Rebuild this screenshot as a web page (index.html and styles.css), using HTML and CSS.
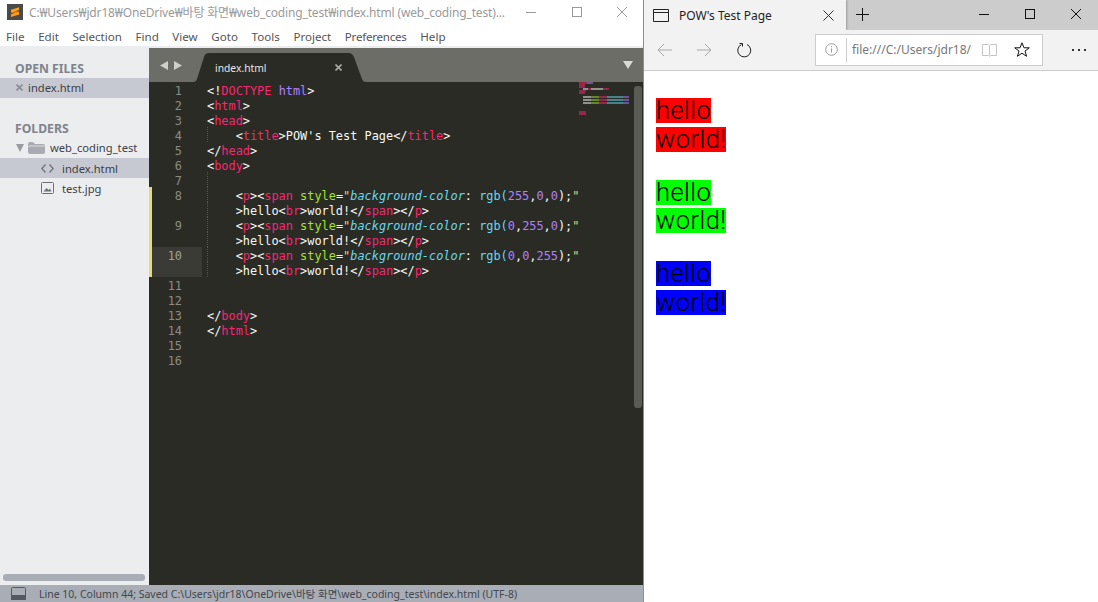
FILE: index.html
```html
<!DOCTYPE html>
<html lang="en">
<head>
<meta charset="utf-8">
<title>Windows</title>
<link rel="stylesheet" href="styles.css">
</head>
<body>
<div class="desktop">
  <section class="sublime">
    <header class="titlebar">
      <svg class="app-icon" width="16" height="16" viewBox="0 0 16 16"><rect width="16" height="16" fill="#4a4a48"/><path d="M4 8.500 12 11V8L4 5.500z" fill="#c97a10"/><path d="M4 5.800 12 3.200v2.900L4 8.700zM4 10.200l8-2.600v2.900l-8 2.600z" fill="#ff9d1e"/></svg>
      <span class="title-text">C:₩Users₩jdr18₩OneDrive₩바탕 화면₩web_coding_test₩index.html (web_coding_test)...</span>
      <div class="win-controls">
        <svg width="10" height="10" viewBox="0 0 10 10"><path d="M0 5.500h10" stroke="#999" fill="none"/></svg>
        <svg width="10" height="10" viewBox="0 0 10 10"><rect x=".5" y=".5" width="9" height="9" stroke="#999" fill="none"/></svg>
        <svg width="10" height="10" viewBox="0 0 10 10"><path d="M0 0l10 10M10 0L0 10" stroke="#999" fill="none"/></svg>
      </div>
    </header>
    <nav class="menubar">
      <span>File</span><span>Edit</span><span>Selection</span><span>Find</span><span>View</span><span>Goto</span><span>Tools</span><span>Project</span><span>Preferences</span><span>Help</span>
    </nav>
    <div class="workspace">
      <aside class="sidebar">
        <h2 class="side-head">OPEN FILES</h2>
        <div class="side-row selected open-row">
          <svg class="close-x" width="7" height="7" viewBox="0 0 7 7"><path d="M.5.5l6 6M6.500.5l-6 6" stroke="#8a8d94" stroke-width="1.600" fill="none"/></svg>
          <span>index.html</span>
        </div>
        <h2 class="side-head folders">FOLDERS</h2>
        <div class="side-row folder-row">
          <svg width="8" height="8" viewBox="0 0 8 8"><path d="M0 0h8L4 8z" fill="#999ba1"/></svg>
          <svg width="17" height="12" viewBox="0 0 17 12"><path d="M0 2q0-2 2-2h3l2 2h8q2 0 2 2v6q0 2-2 2H2q-2 0-2-2z" fill="#a8abb1"/><path d="M.5 5q0-1 1-1h14q1 0 1 1" fill="none" stroke="#dcdee2"/></svg>
          <span>web_coding_test</span>
        </div>
        <div class="side-row selected file-row">
          <svg width="13" height="9" viewBox="0 0 13 9"><path d="M4.500 .5 .8 4.500l3.700 4M8.500 .5l3.700 4-3.700 4" fill="none" stroke="#6d7078" stroke-width="1.200"/></svg>
          <span>index.html</span>
        </div>
        <div class="side-row file-row">
          <svg width="13" height="12" viewBox="0 0 13 12"><rect x=".5" y=".5" width="12" height="11" rx="1" fill="none" stroke="#6d7078"/><path d="M2.500 9.500 5.500 6l2 2 1.500-1.500 1.500 3z" fill="#6d7078"/></svg>
          <span>test.jpg</span>
        </div>
        <div class="side-spacer"></div>
        <div class="side-scroll"></div>
      </aside>
      <main class="editor-pane">
        <div class="tabbar">
          <div class="tab-nav">
            <svg width="8" height="9" viewBox="0 0 8 9"><path d="M8 0v9L0 4.500z" fill="#cfd0cc"/></svg>
            <svg width="8" height="9" viewBox="0 0 8 9"><path d="M0 0v9l8-4.500z" fill="#cfd0cc"/></svg>
          </div>
          <div class="tab">
            <svg class="tab-shape" width="172" height="29" viewBox="0 0 172 29"><path d="M0 29Q2 29 3 26L10 4Q11 0 15 0H155Q158 0 160 4L168 26Q169 29 172 29z" fill="#2a2b25"/></svg>
            <span class="tab-label">index.html</span>
            <svg class="tab-close" width="7" height="7" viewBox="0 0 7 7"><path d="M.5.5l6 6M6.500.5l-6 6" stroke="#a9aaa5" stroke-width="1.600" fill="none"/></svg>
          </div>
          <svg class="tab-menu" width="10" height="8" viewBox="0 0 10 8"><path d="M0 0h10L5 8z" fill="#d9dad6"/></svg>
        </div>
        <div class="editor">
          <div class="code">
            <div class="ln"><span class="num">1</span><code><i class="w">&lt;!</i><i class="t">DOCTYPE</i> <i class="p">html</i><i class="w">&gt;</i></code></div>
            <div class="ln"><span class="num">2</span><code><i class="w">&lt;</i><i class="t">html</i><i class="w">&gt;</i></code></div>
            <div class="ln"><span class="num">3</span><code><i class="w">&lt;</i><i class="t">head</i><i class="w">&gt;</i></code></div>
            <div class="ln"><span class="num">4</span><code><b class="guide"></b><i class="w">&lt;</i><i class="t">title</i><i class="w">&gt;POW's Test Page&lt;/</i><i class="t">title</i><i class="w">&gt;</i></code></div>
            <div class="ln"><span class="num">5</span><code><i class="w">&lt;/</i><i class="t">head</i><i class="w">&gt;</i></code></div>
            <div class="ln"><span class="num">6</span><code><i class="w">&lt;</i><i class="t">body</i><i class="w">&gt;</i></code></div>
            <div class="ln"><span class="num">7</span><code><b class="guide"></b></code></div>
            <div class="ln mod"><span class="num">8</span><code><b class="guide"></b><i class="w">&lt;</i><i class="t">p</i><i class="w">&gt;&lt;</i><i class="t">span</i> <i class="g">style</i><i class="w">=</i><i class="y">"</i><i class="c it">background-color</i><i class="w">:</i> <i class="c">rgb(</i><i class="p">255</i><i class="w">,</i><i class="p">0</i><i class="w">,</i><i class="p">0</i><i class="w">);</i><i class="y">"</i></code></div>
            <div class="ln mod"><span class="num"></span><code><b class="guide"></b><i class="w">&gt;hello&lt;</i><i class="t">br</i><i class="w">&gt;world!&lt;/</i><i class="t">span</i><i class="w">&gt;&lt;/</i><i class="t">p</i><i class="w">&gt;</i></code></div>
            <div class="ln mod"><span class="num">9</span><code><b class="guide"></b><i class="w">&lt;</i><i class="t">p</i><i class="w">&gt;&lt;</i><i class="t">span</i> <i class="g">style</i><i class="w">=</i><i class="y">"</i><i class="c it">background-color</i><i class="w">:</i> <i class="c">rgb(</i><i class="p">0</i><i class="w">,</i><i class="p">255</i><i class="w">,</i><i class="p">0</i><i class="w">);</i><i class="y">"</i></code></div>
            <div class="ln mod"><span class="num"></span><code><b class="guide"></b><i class="w">&gt;hello&lt;</i><i class="t">br</i><i class="w">&gt;world!&lt;/</i><i class="t">span</i><i class="w">&gt;&lt;/</i><i class="t">p</i><i class="w">&gt;</i></code></div>
            <div class="ln mod cur"><span class="num">10</span><code><b class="guide"></b><i class="w">&lt;</i><i class="t">p</i><i class="w">&gt;&lt;</i><i class="t">span</i> <i class="g">style</i><i class="w">=</i><i class="y">"</i><i class="c it">background-color</i><i class="w">:</i> <i class="c">rgb(</i><i class="p">0</i><i class="w">,</i><i class="p">0</i><i class="w">,</i><i class="p">255</i><i class="w">);</i><i class="y">"</i></code></div>
            <div class="ln mod cur"><span class="num"></span><code><b class="guide"></b><i class="w">&gt;hello&lt;</i><i class="t">br</i><i class="w">&gt;world!&lt;/</i><i class="t">span</i><i class="w">&gt;&lt;/</i><i class="t">p</i><i class="w">&gt;</i></code></div>
            <div class="ln"><span class="num">11</span><code></code></div>
            <div class="ln"><span class="num">12</span><code></code></div>
            <div class="ln"><span class="num">13</span><code><i class="w">&lt;/</i><i class="t">body</i><i class="w">&gt;</i></code></div>
            <div class="ln"><span class="num">14</span><code><i class="w">&lt;/</i><i class="t">html</i><i class="w">&gt;</i></code></div>
            <div class="ln"><span class="num">15</span><code></code></div>
            <div class="ln"><span class="num">16</span><code></code></div>
          </div>
          <div class="minimap">
            <div class="mm-row"><b class="mt mm8"></b><b class="mv mm6"></b></div>
            <div class="mm-row"><b class="mt mm6"></b></div>
            <div class="mm-row"><b class="mt mm6"></b></div>
            <div class="mm-row in"><b class="mw mm5"></b><b class="mt mm3"></b><b class="mw mm12"></b><b class="mt mm6"></b></div>
            <div class="mm-row"><b class="mt mm7"></b></div>
            <div class="mm-row"><b class="mt mm6"></b></div>
            <div class="mm-row"></div>
            <div class="mm-row in wide"><b class="mw mm8"></b><b class="mg mm8"></b><b class="mt mm8"></b><b class="mc mm16"></b><b class="mv mm6"></b></div>
            <div class="mm-row in wide"><b class="mw mm8"></b><b class="mg mm8"></b><b class="mt mm8"></b><b class="mc mm16"></b><b class="mv mm6"></b></div>
            <div class="mm-row in wide"><b class="mw mm8"></b><b class="mg mm8"></b><b class="mt mm8"></b><b class="mc mm16"></b><b class="mv mm6"></b></div>
            <div class="mm-row"></div>
            <div class="mm-row"></div>
            <div class="mm-row"></div>
            <div class="mm-row"><b class="mt mm7"></b></div>
            <div class="mm-row"><b class="mt mm7"></b></div>
          </div>
          <div class="vscroll"></div>
        </div>
      </main>
    </div>
    <footer class="statusbar">
      <svg width="15" height="13" viewBox="0 0 15 13"><rect x=".5" y=".5" width="14" height="12" rx="1" fill="none" stroke="#555a62"/><rect x="0" y="8" width="15" height="5" fill="#555a62"/></svg>
      <span>Line 10, Column 44; Saved C:\Users\jdr18\OneDrive\바탕 화면\web_coding_test\index.html (UTF-8)</span>
    </footer>
  </section>
  <section class="browser">
    <div class="tabstrip">
      <div class="b-tab">
        <svg width="16" height="13" viewBox="0 0 16 13"><path d="M.5.5h15v12H.5zM.5 3.500h15" fill="none" stroke="#222"/></svg>
        <span class="b-tab-title">POW's Test Page</span>
        <svg class="b-tab-x" width="11" height="11" viewBox="0 0 11 11"><path d="M.5.5l10 10M10.500.5l-10 10" stroke="#333" fill="none"/></svg>
      </div>
      <svg class="b-new" width="13" height="13" viewBox="0 0 13 13"><path d="M6.500 0v13M0 6.500h13" stroke="#111" fill="none"/></svg>
      <div class="b-controls">
        <svg width="10" height="10" viewBox="0 0 10 10"><path d="M0 5.500h10" stroke="#111" fill="none"/></svg>
        <svg width="10" height="10" viewBox="0 0 10 10"><rect x=".5" y=".5" width="9" height="9" stroke="#111" fill="none"/></svg>
        <svg width="10" height="10" viewBox="0 0 10 10"><path d="M0 0l10 10M10 0L0 10" stroke="#111" fill="none"/></svg>
      </div>
    </div>
    <div class="toolbar">
      <svg width="15" height="14" viewBox="0 0 15 14"><path d="M15 7H1M7 1 1 7l6 6" stroke="#a8a8a8" fill="none"/></svg>
      <svg width="15" height="14" viewBox="0 0 15 14"><path d="M0 7h14M8 1l6 6-6 6" stroke="#a8a8a8" fill="none"/></svg>
      <svg width="15" height="15" viewBox="0 0 15 15"><path d="M4.500 1.500A6.500 6.500 0 1 0 10 1.500" stroke="#222" fill="none"/><path d="M2.500 .5h3v3" stroke="#222" fill="none"/></svg>
      <div class="address">
        <svg width="13" height="13" viewBox="0 0 13 13"><circle cx="6.500" cy="6.500" r="5.800" fill="none" stroke="#999"/><path d="M6.500 5.500v4M6.500 3v1.200" stroke="#999" fill="none"/></svg>
        <span class="addr-sep"></span>
        <span class="addr-url">file:///C:/Users/jdr18/</span>
        <svg class="addr-book" width="15" height="14" viewBox="0 0 15 14"><path d="M.5 1.500h6l1 1 1-1h6v11h-6l-1 1-1-1h-6zM7.500 2.500v10" fill="none" stroke="#c4c4c4"/></svg>
        <svg class="addr-star" width="16" height="15" viewBox="0 0 16 15"><path d="M8 .8l2 5h5.300l-4.300 3.300 1.600 5.200L8 11.200l-4.600 3.100L5 9.100.7 5.800H6z" fill="none" stroke="#111"/></svg>
      </div>
      <svg class="more" width="15" height="3" viewBox="0 0 15 3"><path d="M0 0h2v2H0zM6 0h2v2H6zM12 0h2v2h-2z" fill="#333"/></svg>
    </div>
    <div class="page">
      <p class="para"><span class="hl red">hello</span><span class="hl red">world!</span></p>
      <p class="para"><span class="hl green">hello</span><span class="hl green">world!</span></p>
      <p class="para"><span class="hl blue">hello</span><span class="hl blue">world!</span></p>
    </div>
  </section>
</div>
</body>
</html>
```
FILE: styles.css
```css
* { box-sizing: border-box; }
html, body { margin: 0; height: 100%; overflow: hidden; }
body { font-family: "Noto Sans", "Noto Sans CJK KR", sans-serif; background: #fff; }
.desktop { display: flex; width: 1098px; height: 602px; }

.sublime { width: 644px; height: 602px; display: flex; flex-direction: column; border-right: 1px solid #8f908c; flex: none; }
.titlebar { height: 28px; display: flex; align-items: center; padding: 0 16px 4px 7px; background: #fff; flex: none; }
.app-icon { flex: none; margin-right: 6px; }
.title-text { font-size: 12px; color: #9a9a9a; white-space: nowrap; letter-spacing: -.16px; flex: 1; min-width: 0; }
.win-controls { display: flex; gap: 35.500px; flex: none; }
.menubar { height: 18px; display: flex; gap: 13.600px; padding: 0 0 0 6px; font-size: 11.600px; line-height: 18px; color: #555; background: #fff; flex: none; }
.menubar span:nth-child(9) { letter-spacing: -.25px; }

.workspace { flex: 1; display: flex; min-height: 0; }
.sidebar { width: 149px; background: #ebedef; display: flex; flex-direction: column; flex: none; }
.side-head { margin: 0; padding-left: 15px; font-size: 12.200px; font-weight: 700; color: #80838b; line-height: 16px; }
.sidebar > .side-head:first-child { margin-top: 15px; }
.side-head.folders { margin-top: 23px; }
.side-row { height: 20px; display: flex; align-items: center; padding-bottom: 2px; font-size: 11.200px; color: #3f4148; white-space: nowrap; }
.side-row svg { flex: none; }
.selected { background: #c6c9d2; }
.open-row { padding-left: 16px; margin-top: 1px; }
.close-x { margin-right: 5px; }
.folder-row { padding-left: 16px; padding-bottom: 1px; margin-top: 1px; }
.folder-row svg:nth-child(2) { margin: 0 5px 0 4px; }
.file-row { padding-left: 41px; padding-bottom: 0; }
.file-row svg { margin-right: 8px; }
.side-spacer { flex: 1; }
.side-scroll { height: 7px; margin: 0 4px 4px 3px; border-radius: 3px; background: #a8adb6; }

.editor-pane { flex: 1; display: flex; flex-direction: column; min-width: 0; }
.tabbar { height: 36px; background: #6c6d67; border-top: 2px solid #ebedef; display: flex; align-items: flex-end; flex: none; }
.tab-nav { display: flex; gap: 6px; align-self: center; margin-left: 11px; width: 34px; flex: none; }
.tab { width: 172px; height: 29px; position: relative; display: flex; align-items: center; padding: 0 24px 0 21px; justify-content: space-between; flex: none; font-size: 10.300px; color: #e6e6e2; }
.tab-shape { position: absolute; left: 0; top: 0; }
.tab-label, .tab-close { position: relative; }
.tab-close { flex: none; }
.tab-menu { margin-left: auto; margin-right: 10px; align-self: center; flex: none; }

.editor { flex: 1; background: #2a2b25; position: relative; min-height: 0; }
.ln { height: 15px; display: flex; font-family: "DejaVu Sans Mono", monospace; font-size: 11.900px; line-height: 18px; border-left: 3px solid transparent; }
.ln.mod { border-left-color: #e6db74; }
.num { width: 50px; height: 15px; text-align: right; padding-right: 20px; color: #8a8b85; flex: none; }
.cur .num { background: #3a3b34; color: #a0a19b; }
code { font: inherit; padding-left: 5px; white-space: pre; display: block; }
code i { font-style: normal; }
.guide { display: inline-block; vertical-align: top; width: 4ch; height: 15px; border-left: 1px dotted #55564f; }
.w { color: #f8f8f2; }
.t { color: #f92672; }
.p { color: #ae81ff; }
.g { color: #a6e22e; }
.y { color: #e6db74; }
.c { color: #66d9ef; }
code i.it { font-style: italic; }

.minimap { position: absolute; left: 430px; top: 0; width: 52px; display: flex; flex-direction: column; }
.mm-row { height: 2px; display: flex; flex: none; }
.mm-row.in { padding-left: 4px; }
.mm-row.wide { height: 3px; }
.mm-row b { display: block; height: 2px; opacity: .5; }
.mt { background: #f92672; }
.mv { background: #ae81ff; }
.mw { background: #f8f8f2; }
.mg { background: #a6e22e; }
.mc { background: #66d9ef; }
.mm3 { width: 3px; } .mm5 { width: 5px; } .mm6 { width: 6px; } .mm7 { width: 7px; } .mm8 { width: 8px; } .mm12 { width: 12px; } .mm16 { width: 16px; }
.vscroll { position: absolute; left: 485px; top: 4px; width: 8px; height: 322px; border-radius: 3px; background: #5a5b55; }

.statusbar { height: 17px; background: #a8adb6; display: flex; align-items: center; padding-left: 11px; gap: 13px; font-size: 10.500px; color: #44474e; white-space: nowrap; flex: none; }
.statusbar svg { flex: none; }

.browser { flex: 1; display: flex; flex-direction: column; min-width: 0; background: #fff; }
.tabstrip { height: 30px; background: #cccccc; display: flex; flex: none; }
.b-tab { width: 202px; height: 30px; background: #f2f2f2; display: flex; align-items: center; padding: 0 12px 0 9px; flex: none; box-shadow: 1px 0 2px rgba(0,0,0,.25); }
.b-tab-title { font-size: 12px; color: #222; margin-left: 10px; flex: 1; }
.b-new { margin: 8px 0 0 10px; flex: none; }
.b-controls { display: flex; gap: 36px; margin: 9px 0 0 auto; padding-right: 17px; height: 10px; }
.toolbar { height: 41px; background: #f2f2f2; border-bottom: 1px solid #cccccc; display: flex; align-items: center; padding-left: 13px; flex: none; gap: 25px; }
.toolbar svg { flex: none; }
.address { width: 228px; height: 32px; margin: -1px 0 0 38px; background: #fff; border: 1px solid #cccccc; display: flex; align-items: center; padding-left: 9px; flex: none; }
.addr-sep { width: 1px; height: 24px; background: #ccc; margin: 0 5px 0 8px; flex: none; }
.addr-url { font-size: 12px; color: #777; white-space: nowrap; width: 122px; flex: none; }
.addr-book { margin-left: 8px; }
.addr-star { margin-left: 17px; }
.more { margin-left: 4px; }
.page { flex: 1; padding: 27px 0 0 12px; }
.para { margin: 0 0 28px; display: flex; flex-direction: column; align-items: flex-start; gap: 3.500px; }
.hl { display: block; height: 25px; font-family: Roboto, sans-serif; font-weight: 300; font-size: 25.500px; line-height: 25px; letter-spacing: .45px; color: #000; }
.red { background: #ff0000; }
.green { background: #00ff00; }
.blue { background: #0000ff; }
```
